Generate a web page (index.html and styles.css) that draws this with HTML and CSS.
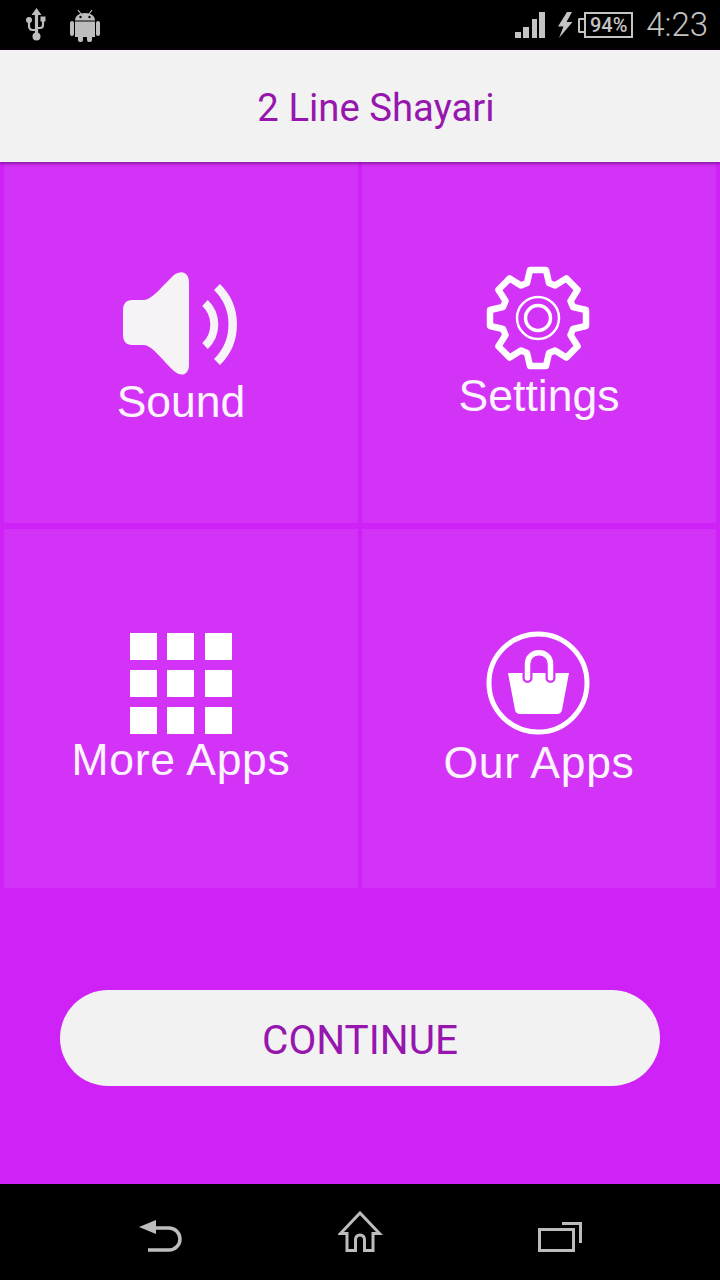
FILE: index.html
```html
<!DOCTYPE html>
<html lang="en">
<head>
<meta charset="utf-8">
<title>2 Line Shayari</title>
<link rel="stylesheet" href="styles.css">
</head>
<body>
<div class="screen">
  <div class="statusbar">
    <div class="status-left">
      <svg class="ic-usb" width="24" height="34" viewBox="0 0 24 34"><path d="M12.500 0l5 7h-3.400v20h-3.200V7H7.500z" fill="#bdbdbd"/><circle cx="12.500" cy="28.500" r="4" fill="#bdbdbd"/><circle cx="5" cy="12" r="3" fill="#bdbdbd"/><rect x="16.500" y="8.500" width="5" height="5" fill="#bdbdbd"/><path d="M5 13v5q0 4 4 4h3.500M19 13v4q0 3-3 3h-3.500" fill="none" stroke="#bdbdbd" stroke-width="2.200"/></svg>
      <svg class="ic-android" width="30" height="33" viewBox="0 0 30 33"><g fill="#bdbdbd"><rect x="0" y="12" width="4" height="15" rx="2"/><rect x="26" y="12" width="4" height="15" rx="2"/><path d="M5 12.500h20V28H5z"/><path d="M5 11.500C5 7 9 4 15 4s10 3 10 7.500z"/><rect x="8" y="26" width="5" height="7" rx="2"/><rect x="17" y="26" width="5" height="7" rx="2"/><path d="M8 1l3 4M22 1l-3 4" stroke="#bdbdbd" stroke-width="1.200"/></g><circle cx="10.500" cy="8" r="1.200" fill="#000"/><circle cx="19.500" cy="8" r="1.200" fill="#000"/></svg>
    </div>
    <div class="status-right">
      <svg class="ic-signal" width="30" height="26" viewBox="0 0 30 26"><g fill="#c4c4c4"><rect x="0" y="20" width="6" height="6"/><rect x="8" y="15" width="6" height="11"/><rect x="17" y="7" width="5" height="19"/><rect x="24" y="0" width="6" height="26"/></g></svg>
      <svg class="ic-bolt" width="16" height="26" viewBox="0 0 16 26"><path d="M10 0L1 14.500h5.500L2 26 15.500 10H9.500L15 0z" fill="#c4c4c4"/></svg>
      <div class="battery"><span class="battery-tip"></span><span class="battery-body">94%</span></div>
      <span class="clock">4:23</span>
    </div>
  </div>

  <header class="appbar">
    <h1 class="appbar-title">2 Line Shayari</h1>
  </header>

  <main class="content">
    <section class="grid">
      <div class="cell cell-sound">
        <svg class="icon" width="116" height="108" viewBox="0 0 116 108">
          <path d="M10 30H22C30 30 42 14 52 5C60-1 67 3 67 12V95C67 104 60 108 52 101C42 92 30 75 22 75H10C4 75 1 71 1 65V40C1 34 4 30 10 30z" fill="#f5f3f6"/>
          <path d="M83 33A29.500 29.500 0 0 1 83 76" fill="none" stroke="#f5f3f6" stroke-width="8"/>
          <path d="M95 17A52.600 52.600 0 0 1 95 92" fill="none" stroke="#f5f3f6" stroke-width="8.500"/>
        </svg>
        <span class="label">Sound</span>
      </div>
      <div class="cell cell-settings">
        <svg class="icon" width="104" height="104" viewBox="0 0 104 104">
          <path transform="translate(52 52)" d="M-8-48H8L11-35 17-32.500 28.300-39.600 39.600-28.300 32.500-17 35-11 48-8V8L35 11 32.500 17 39.600 28.300 28.300 39.600 17 32.500 11 35 8 48H-8L-11 35-17 32.500-28.300 39.600-39.600 28.300-32.500 17-35 11-48 8V-8L-35-11-32.500-17-39.600-28.300-28.300-39.600-17-32.500-11-35z" fill="none" stroke="#fff" stroke-width="6.500" stroke-linejoin="round"/>
          <circle cx="52" cy="52" r="21" fill="none" stroke="#fff" stroke-width="2.500"/>
          <circle cx="52" cy="52" r="12.500" fill="none" stroke="#fff" stroke-width="3.500"/>
        </svg>
        <span class="label">Settings</span>
      </div>
      <div class="cell cell-more">
        <div class="dots">
          <i></i><i></i><i></i><i></i><i></i><i></i><i></i><i></i><i></i>
        </div>
        <span class="label label-wide">More Apps</span>
      </div>
      <div class="cell cell-our">
        <svg class="icon" width="104" height="104" viewBox="0 0 104 104">
          <circle cx="52" cy="52" r="49" fill="none" stroke="#fff" stroke-width="5"/>
          <path d="M22 42H83L76 79Q75 83 71 83H34Q30 83 29 79z" fill="#fff"/>
          <path d="M41.500 42V47M64.500 42V47" fill="none" stroke="#d333f6" stroke-width="10" stroke-linecap="round"/>
          <path d="M41.500 47V33C41.500 18 64.500 18 64.500 33V47" fill="none" stroke="#fff" stroke-width="5.500" stroke-linecap="round"/>
        </svg>
        <span class="label label-wide">Our Apps</span>
      </div>
    </section>
    <div class="action">
      <button class="continue" type="button">CONTINUE</button>
    </div>
  </main>

  <nav class="navbar">
    <svg class="nav-back" width="46" height="36" viewBox="0 0 46 36"><path d="M1 11L18 4V18z" fill="#bdbdbd"/><path d="M16 12H31a11 11 0 0 1 0 22H10" fill="none" stroke="#bdbdbd" stroke-width="3.500"/></svg>
    <svg width="46" height="42" viewBox="0 0 46 42"><path d="M9 22.500H2.500L22 2 41.500 22.500H35V39.500H26.500V29q0-5-4.500-5t-4.500 5V39.500H9z" fill="none" stroke="#bdbdbd" stroke-width="3"/></svg>
    <svg width="44" height="40" viewBox="0 0 44 40"><rect x="1.500" y="17.500" width="34" height="21" fill="none" stroke="#bdbdbd" stroke-width="3"/><path d="M24 11.500H42.500V31" fill="none" stroke="#bdbdbd" stroke-width="3"/></svg>
  </nav>
</div>
</body>
</html>
```

FILE: styles.css
```css
* { box-sizing: border-box; }
html, body { margin: 0; padding: 0; }
body { background: #000; font-family: "Roboto", sans-serif; }
.screen { width: 720px; height: 1280px; display: flex; flex-direction: column; overflow: hidden; }

.statusbar { height: 50px; background: #000; display: flex; justify-content: space-between; align-items: center; padding: 0 12px 0 24px; }
.status-left { display: flex; align-items: center; gap: 22px; }
.ic-usb { margin-top: -1px; }
.ic-android { margin-top: 0; }
.status-right { display: flex; align-items: center; }
.ic-bolt { margin-left: 12px; margin-right: 5px; }
.battery { display: flex; align-items: center; }
.battery-tip { width: 6px; height: 15px; border: 2px solid #c4c4c4; border-right: 0; border-radius: 2px 0 0 2px; }
.battery-body { width: 49px; height: 26px; border: 2px solid #c4c4c4; color: #c4c4c4; font: 500 20px/22px "Roboto", sans-serif; text-align: center; }
.clock { margin-left: 13px; color: #c4c4c4; font: 300 33px/50px "Roboto", sans-serif; }

.appbar { height: 112px; background: #f2f2f2; display: flex; align-items: center; justify-content: center; position: relative; z-index: 1; box-shadow: 0 1px 4px rgba(70, 0, 90, .75); padding: 4px 0 0 32px; }
.appbar-title { margin: 0; color: #9616ae; font: 400 38.300px/1 "Roboto", sans-serif; }

.content { flex: 1; background: #cf22f6; display: flex; flex-direction: column; }
.grid { display: grid; grid-template-columns: 354px 354px; grid-template-rows: 361px 359px; column-gap: 4px; row-gap: 6px; padding: 0 4px; }
.cell { background: #d333f6; display: flex; flex-direction: column; align-items: center; }
.cell-sound { padding-top: 108px; }
.cell-settings { padding-top: 104px; }
.cell-more { padding-top: 104px; }
.cell-our { padding-top: 102px; }
.icon { display: block; }
.cell-sound .icon { margin-left: -2px; }
.cell-settings .icon, .cell-our .icon { margin-left: -2px; }
.label { color: #fbf3fd; font: 400 44.500px/50px "Liberation Sans", Arial, sans-serif; }
.label-wide { letter-spacing: 0.700px; }
.cell-sound .label { margin-top: -1px; }
.cell-settings .label { margin-top: 1px; }
.cell-more .label { margin-top: 1px; }
.cell-our .label { margin-top: 3px; }

.dots { width: 102px; height: 101px; margin-right: 1px; display: grid; grid-template-columns: repeat(3, 27px); grid-template-rows: repeat(3, 27px); justify-content: space-between; align-content: space-between; }
.dots i { background: #fff; display: block; }

.action { flex: 1; display: flex; justify-content: center; padding-top: 102px; }
.continue { width: 600px; height: 96px; border: 0; border-radius: 48px; background: #f2f2f2; color: #9616ae; font: 400 40.500px/1 "Roboto", sans-serif; padding: 5px 0 0; }

.navbar { height: 96px; background: #000; display: flex; justify-content: space-between; align-items: center; padding: 0 138px; }
.nav-back { margin-top: 4px; }
```
